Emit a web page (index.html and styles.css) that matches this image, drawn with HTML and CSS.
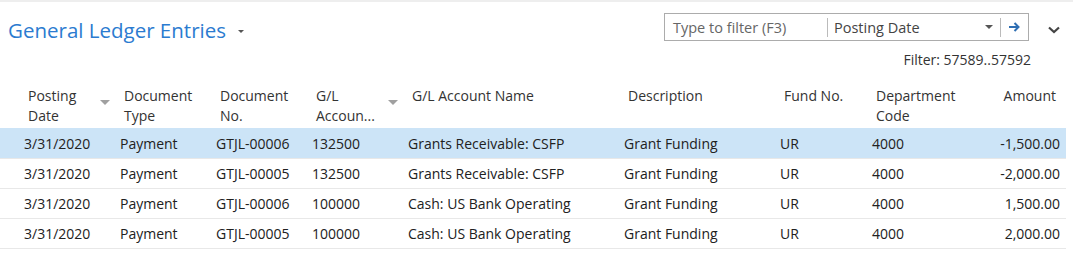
FILE: index.html
```html
<!DOCTYPE html>
<html lang="en">
<head>
  <meta charset="UTF-8" />
  <title>General Ledger Entries</title>
  <link rel="stylesheet" href="styles.css">
</head>
<body>

  <div class="topbar">
    <div class="title">
      <h1>General Ledger Entries</h1>
      <span class="caret small"></span>
    </div>
    <div class="tools">
      <div class="filterbox">
        <span class="search">Type to filter (F3)</span>
        <span class="field">Posting Date</span>
        <span class="caret"></span>
        <span class="go">
          <svg width="11" height="10" viewBox="0 0 11 10"><path d="M0 5h9M5.5 1l4 4-4 4" fill="none" stroke="#2f6fb3" stroke-width="2"/></svg>
        </span>
      </div>
      <span class="collapse">
        <svg width="12" height="8" viewBox="0 0 12 8"><path d="M1 1.5l5 4.5 5-4.5" fill="none" stroke="#444" stroke-width="2.2"/></svg>
      </span>
    </div>
  </div>
  <div class="filterline">Filter: 57589..57592</div>

  <table class="grid">
    <colgroup>
      <col style="width:116px"><col style="width:96px"><col style="width:96px"><col style="width:96px">
      <col style="width:216px"><col style="width:156px"><col style="width:92px"><col style="width:100px"><col>
    </colgroup>
    <thead>
      <tr>
        <th class="first sorted">Posting<br>Date<span class="caret"></span></th>
        <th>Document<br>Type</th>
        <th>Document<br>No.</th>
        <th class="sorted">G/L<br>Accoun...<span class="caret"></span></th>
        <th class="top">G/L Account Name</th>
        <th class="top">Description</th>
        <th class="top">Fund No.</th>
        <th>Department<br>Code</th>
        <th class="num top">Amount</th>
      </tr>
    </thead>
    <tbody id="rows"></tbody>
  </table>

  <script>
    const entries = [
      ['3/31/2020', 'Payment', 'GTJL-00006', '132500', 'Grants Receivable: CSFP', 'Grant Funding', 'UR', '4000', '-1,500.00'],
      ['3/31/2020', 'Payment', 'GTJL-00005', '132500', 'Grants Receivable: CSFP', 'Grant Funding', 'UR', '4000', '-2,000.00'],
      ['3/31/2020', 'Payment', 'GTJL-00006', '100000', 'Cash: US Bank Operating', 'Grant Funding', 'UR', '4000', '1,500.00'],
      ['3/31/2020', 'Payment', 'GTJL-00005', '100000', 'Cash: US Bank Operating', 'Grant Funding', 'UR', '4000', '2,000.00']
    ];

    const body = document.getElementById('rows');
    entries.forEach((e, i) => {
      const tr = document.createElement('tr');
      if (i === 0) tr.className = 'selected';
      e.forEach((v, j) => {
        const td = document.createElement('td');
        td.textContent = v;
        if (j === 0) td.className = 'first';
        if (j === e.length - 1) td.className = 'num';
        tr.appendChild(td);
      });
      body.appendChild(tr);
    });
  </script>

</body>
</html>
```

FILE: styles.css
```css
body {
  margin: 0;
  font-family: "Segoe UI", "Open Sans", sans-serif;
  font-size: 14px;
  color: #212121;
  background: white;
  border-top: 2px solid #eeeeee;
  width: 1073px;
}
.topbar {
  display: flex;
  justify-content: space-between;
  padding: 8px 0 0 8px;
}
.title {
  display: flex;
  align-items: center;
  gap: 12px;
  padding-top: 6px;
}
h1 {
  margin: 0;
  font-size: 20.5px;
  font-weight: normal;
  color: #2b7bd0;
}
.caret {
  width: 0;
  height: 0;
  border-left: 4px solid transparent;
  border-right: 4px solid transparent;
  border-top: 4px solid #888;
}
.caret.small {
  border-width: 3px 3px 0 3px;
  border-top-color: #555;
  margin-top: 2px;
}
.tools {
  display: flex;
  align-items: center;
  gap: 19px;
  padding-right: 13px;
}
.filterbox {
  display: flex;
  align-items: center;
  width: 363px;
  height: 26px;
  border: 1px solid #acacac;
  color: #666;
  font-size: 14.5px;
}
.filterbox .search {
  width: 154px;
  padding-left: 8px;
  border-right: 1px solid #bbb;
  line-height: 19px;
}
.filterbox .field {
  flex: 1;
  padding-left: 6px;
  color: #444;
}
.filterbox .caret {
  border-top-color: #555;
  margin-right: 7px;
}
.filterbox .go {
  display: flex;
  align-items: center;
  justify-content: center;
  width: 27px;
  height: 19px;
  border-left: 1px solid #bbb;
}
.collapse {
  display: flex;
  padding-top: 6px;
}
.filterline {
  text-align: right;
  padding: 6px 42px 0 0;
  font-size: 14px;
  color: #333;
}
.grid {
  border-collapse: collapse;
  table-layout: fixed;
  width: 1066px;
  margin-top: 17px;
}
.grid th {
  position: relative;
  text-align: left;
  font-weight: normal;
  vertical-align: top;
  color: #333;
  line-height: 20px;
  padding: 0 0 2px 8px;
  height: 40px;
}
.grid th.first {
  padding-left: 28px;
}
.grid th .caret {
  position: absolute;
  right: 6px;
  top: 14px;
  border-top-color: #a0a0a0;
  border-width: 5px 5px 0 5px;
}
.grid th.num {
  text-align: right;
  padding-right: 10px;
}
.grid td {
  height: 29px;
  padding: 0 0 0 4px;
  border-top: 1px solid #e8e8e8;
  white-space: nowrap;
}
.grid tbody tr:last-child td {
  border-bottom: 1px solid #e8e8e8;
}
.grid td.first {
  padding-left: 24px;
}
.grid td.num {
  text-align: right;
  padding-right: 6px;
}
.grid tr.selected td {
  background: #cce4f7;
  border-top-color: #cce4f7;
}
```
